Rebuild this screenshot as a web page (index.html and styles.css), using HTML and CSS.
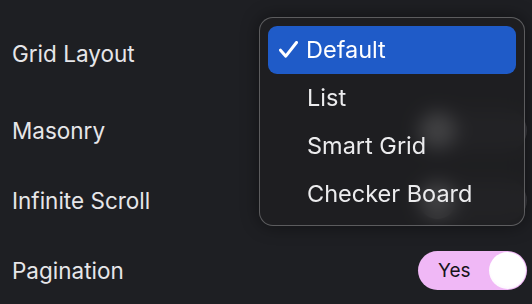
FILE: index.html
```html
<!DOCTYPE html>
<html lang="en">
<head>
    <meta charset="UTF-8">
    <meta name="viewport" content="width=device-width, initial-scale=1.0">
    <title>Gallery Settings</title>
    <link rel="stylesheet" href="styles.css">
</head>
<body>
    <div class="settings">
        <div class="row row-first">
            <span class="label">Grid Layout</span>
        </div>
        <div class="row">
            <span class="label">Masonry</span>
            <div class="toggle toggle-off"><span class="knob"></span></div>
        </div>
        <div class="row">
            <span class="label">Infinite Scroll</span>
            <div class="toggle toggle-off"><span class="knob"></span></div>
        </div>
        <div class="row">
            <span class="label">Pagination</span>
            <div class="toggle toggle-on"><span class="toggle-text">Yes</span><span class="knob"></span></div>
        </div>

        <!-- open popup for Grid Layout -->
        <ul class="menu">
            <li class="menu-item selected">
                <svg class="check" width="19" height="17" viewBox="0 0 19 17">
                    <path d="M1.5 9.2 L6.8 15.2 L17.5 1.5" fill="none" stroke="#fff" stroke-width="3" stroke-linecap="round" stroke-linejoin="round"/>
                </svg>
                Default
            </li>
            <li class="menu-item">List</li>
            <li class="menu-item">Smart Grid</li>
            <li class="menu-item">Checker Board</li>
        </ul>
    </div>
</body>
</html>
```

FILE: styles.css
```css
html, body {
    margin: 0;
    padding: 0;
}
body {
    background-color: #1e1f23;
    font-family: Inter, "Liberation Sans", Arial, sans-serif;
    color: #e6e6e9;
    width: 532px;
    height: 304px;
    overflow: hidden;
}
.settings {
    position: relative;
    padding: 11px 5px 0 12px;
}
.row {
    display: flex;
    align-items: center;
    justify-content: space-between;
    height: 70px;
}
.row-first {
    height: 84px;
}
.label {
    font-size: 22.5px;
}
.toggle {
    display: flex;
    align-items: center;
    box-sizing: border-box;
    width: 109px;
    height: 39px;
    border-radius: 20px;
    padding: 0 1px;
}
.toggle-off {
    background-color: #3a3a3f;
}
.toggle-on {
    background-color: #f0b8f6;
    justify-content: space-between;
}
.toggle-text {
    color: #17141a;
    font-size: 19px;
    padding-left: 19px;
}
.knob {
    width: 37px;
    height: 37px;
    border-radius: 50%;
    background: radial-gradient(circle at 50% 45%, #ffffff 60%, #f7e8fa 100%);
}
.menu {
    position: absolute;
    left: 259px;
    top: 17px;
    width: 266px;
    height: 209px;
    box-sizing: border-box;
    margin: 0;
    padding: 8px 8px 0 8px;
    list-style: none;
    border-radius: 14px;
    border: 1px solid rgba(255, 255, 255, 0.28);
    background-color: rgba(30, 30, 33, 0.85);
    backdrop-filter: blur(9px);
    box-shadow: 0 0 18px rgba(0, 0, 0, 0.45);
}
.menu-item {
    display: flex;
    align-items: center;
    box-sizing: border-box;
    height: 48px;
    padding-left: 39px;
    padding-bottom: 2px;
    font-size: 23.5px;
    color: #ececee;
    border-radius: 9px;
}
.menu-item.selected {
    background-color: #1f5bc8;
    color: #ffffff;
    padding-left: 11px;
    gap: 8px;
}
```
